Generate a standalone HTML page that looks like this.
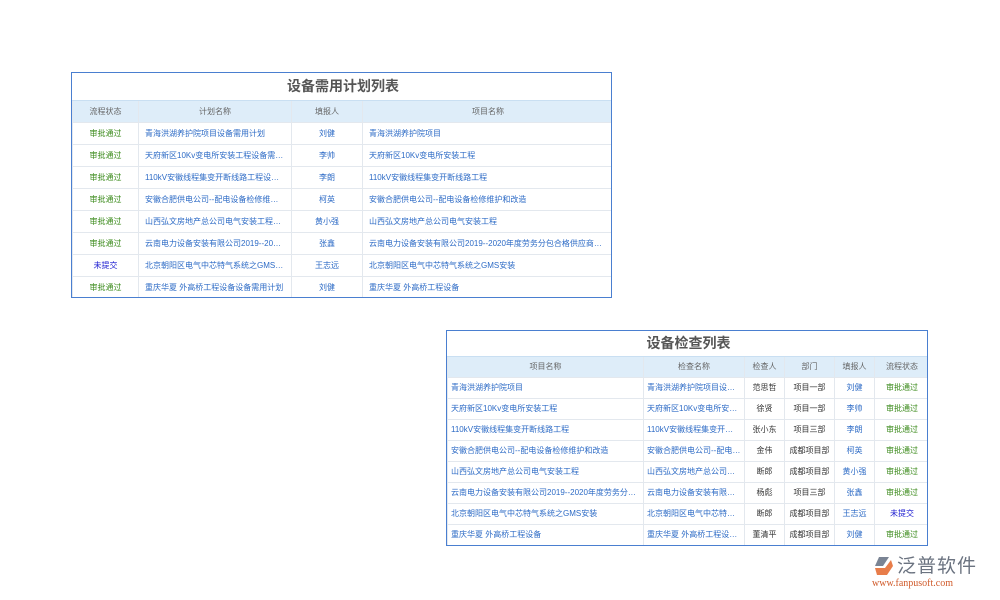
<html><head><style>
body{margin:0;width:1000px;height:600px;background:#fff;font-family:"Liberation Sans","Noto Sans CJK SC",sans-serif;position:relative;overflow:hidden}
.w{position:absolute;border:1px solid #4a7fd0;box-sizing:border-box;overflow:hidden}
table{border-collapse:collapse;font-size:8px;table-layout:fixed;width:100%}
td,th{border:1px solid #e3e8ee;height:21px;padding:0 6px;white-space:nowrap;overflow:hidden;text-overflow:ellipsis;font-weight:normal}
.w1 td,.w1 th{height:22px}
.s td,.s th{padding:0 3px}
th{background:#deedf9;color:#666;text-align:center}
.t{background:#fff;color:#555;font-size:14px;font-weight:bold;text-align:center;border:none;border-bottom:1px solid #c9dff2}
.l{color:#2d6bc6}.c{text-align:center}.g{color:#3a8a1a;text-align:center}.b{color:#1a1ad0;text-align:center}.k{color:#333;text-align:center}
</style></head><body>
<div class="w w1" style="left:71px;top:72px;width:541px;height:226px">
<table>
<colgroup><col style="width:66px"><col style="width:153px"><col style="width:71px"><col style="width:251px"></colgroup>
<tr><td colspan="4" class="t" style="height:27px">设备需用计划列表</td></tr>
<tr><th>流程状态</th><th>计划名称</th><th>填报人</th><th>项目名称</th></tr>
<tr><td class="g">审批通过</td><td class="l">青海洪湖养护院项目设备需用计划</td><td class="l c">刘健</td><td class="l">青海洪湖养护院项目</td></tr>
<tr><td class="g">审批通过</td><td class="l">天府新区10Kv变电所安装工程设备需用计划</td><td class="l c">李帅</td><td class="l">天府新区10Kv变电所安装工程</td></tr>
<tr><td class="g">审批通过</td><td class="l">110kV安徽线程集变开断线路工程设备需用计划</td><td class="l c">李朗</td><td class="l">110kV安徽线程集变开断线路工程</td></tr>
<tr><td class="g">审批通过</td><td class="l">安徽合肥供电公司--配电设备检修维护和改造</td><td class="l c">柯英</td><td class="l">安徽合肥供电公司--配电设备检修维护和改造</td></tr>
<tr><td class="g">审批通过</td><td class="l">山西弘文房地产总公司电气安装工程设备</td><td class="l c">黄小强</td><td class="l">山西弘文房地产总公司电气安装工程</td></tr>
<tr><td class="g">审批通过</td><td class="l">云南电力设备安装有限公司2019--2020年度</td><td class="l c">张鑫</td><td class="l">云南电力设备安装有限公司2019--2020年度劳务分包合格供应商招标</td></tr>
<tr><td class="b">未提交</td><td class="l">北京朝阳区电气中芯特气系统之GMS安装</td><td class="l c">王志远</td><td class="l">北京朝阳区电气中芯特气系统之GMS安装</td></tr>
<tr><td class="g">审批通过</td><td class="l">重庆华夏 外高桥工程设备设备需用计划</td><td class="l c">刘健</td><td class="l">重庆华夏 外高桥工程设备</td></tr>
</table></div>
<div class="w s" style="left:446px;top:330px;width:482px;height:216px">
<table>
<colgroup><col style="width:196px"><col style="width:101px"><col style="width:40px"><col style="width:50px"><col style="width:40px"><col style="width:55px"></colgroup>
<tr><td colspan="6" class="t" style="height:25px">设备检查列表</td></tr>
<tr><th>项目名称</th><th>检查名称</th><th>检查人</th><th>部门</th><th>填报人</th><th>流程状态</th></tr>
<tr><td class="l">青海洪湖养护院项目</td><td class="l">青海洪湖养护院项目设备检查</td><td class="k">范思哲</td><td class="k">项目一部</td><td class="l c">刘健</td><td class="g">审批通过</td></tr>
<tr><td class="l">天府新区10Kv变电所安装工程</td><td class="l">天府新区10Kv变电所安装工程</td><td class="k">徐贤</td><td class="k">项目一部</td><td class="l c">李帅</td><td class="g">审批通过</td></tr>
<tr><td class="l">110kV安徽线程集变开断线路工程</td><td class="l">110kV安徽线程集变开断线路</td><td class="k">张小东</td><td class="k">项目三部</td><td class="l c">李朗</td><td class="g">审批通过</td></tr>
<tr><td class="l">安徽合肥供电公司--配电设备检修维护和改造</td><td class="l">安徽合肥供电公司--配电设备</td><td class="k">金伟</td><td class="k">成都项目部</td><td class="l c">柯英</td><td class="g">审批通过</td></tr>
<tr><td class="l">山西弘文房地产总公司电气安装工程</td><td class="l">山西弘文房地产总公司电气安装</td><td class="k">断郎</td><td class="k">成都项目部</td><td class="l c">黄小强</td><td class="g">审批通过</td></tr>
<tr><td class="l">云南电力设备安装有限公司2019--2020年度劳务分包合格</td><td class="l">云南电力设备安装有限公司2019</td><td class="k">杨彪</td><td class="k">项目三部</td><td class="l c">张鑫</td><td class="g">审批通过</td></tr>
<tr><td class="l">北京朝阳区电气中芯特气系统之GMS安装</td><td class="l">北京朝阳区电气中芯特气系统</td><td class="k">断郎</td><td class="k">成都项目部</td><td class="l c">王志远</td><td class="b">未提交</td></tr>
<tr><td class="l">重庆华夏 外高桥工程设备</td><td class="l">重庆华夏 外高桥工程设备检查</td><td class="k">董清平</td><td class="k">成都项目部</td><td class="l c">刘健</td><td class="g">审批通过</td></tr>
</table></div>
<div style="position:absolute;left:873px;top:556px;width:22px;height:20px">
<svg width="22" height="20" viewBox="0 0 22 20"><path d="M6 1 L16 1 L10 10 L2 10 Z" fill="#7a8494"/><path d="M2 12 L12 12 L18 4 L20 10 L14 19 L4 19 Z" fill="#e87d4a"/></svg></div>
<div style="position:absolute;left:897px;top:553px;font-size:19px;color:#6b7380;letter-spacing:1px;font-family:'Noto Sans CJK SC',sans-serif;line-height:24px">泛普软件</div>
<div style="position:absolute;left:872px;top:578px;font-size:10px;color:#d05a2a;font-family:'Liberation Serif',serif">www.fanpusoft.com</div>
</body></html>
